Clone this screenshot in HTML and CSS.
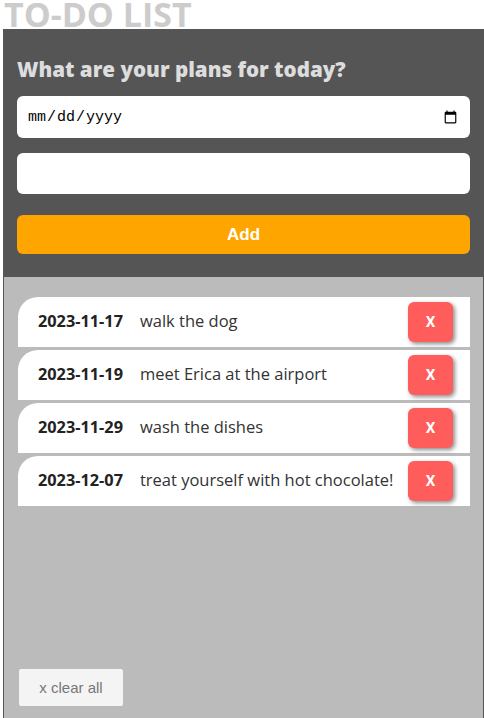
FILE: index.html
```html
<!DOCTYPE html>
<html lang="en">
<head>
<meta charset="utf-8">
<title>To-Do List</title>
<link rel="stylesheet" href="styles.css">
</head>
<body>
<h1 class="title">TO-DO LIST</h1>
<div class="app">
  <form class="entry">
    <h2 class="prompt">What are your plans for today?</h2>
    <input class="field field-date" type="date">
    <input class="field field-text" type="text">
    <button class="add" type="button">Add</button>
  </form>
  <section class="board">
    <ul class="tasks">
      <li class="task"><span class="task-date">2023-11-17</span><span class="task-text">walk the dog</span><button class="del" type="button">X</button></li>
      <li class="task"><span class="task-date">2023-11-19</span><span class="task-text">meet Erica at the airport</span><button class="del" type="button">X</button></li>
      <li class="task"><span class="task-date">2023-11-29</span><span class="task-text">wash the dishes</span><button class="del" type="button">X</button></li>
      <li class="task"><span class="task-date">2023-12-07</span><span class="task-text">treat yourself with hot chocolate!</span><button class="del" type="button">X</button></li>
    </ul>
    <button class="clear" type="button">x clear all</button>
  </section>
</div>
</body>
</html>
```
FILE: styles.css
```css
html, body {
  margin: 0;
  padding: 0;
  background: #ffffff;
  overflow: hidden;
}
body {
  font-family: "Open Sans", "Liberation Sans", sans-serif;
  padding-left: 3px;
}
.title {
  margin: 0;
  font-size: 34px;
  line-height: 29px;
  font-weight: 700;
  color: #cccccc;
  padding-left: 1px;
}
.app {
  width: 481px;
  box-sizing: border-box;
  border-left: 1px solid #555555;
  border-right: 1px solid #555555;
}
.entry {
  background: #555555;
  padding: 27px 13px 23px;
  display: flex;
  flex-direction: column;
  margin: 0;
}
.prompt {
  margin: 0 0 13px;
  font-size: 20.6px;
  font-weight: 800;
  color: #dddddd;
  line-height: 27px;
}
.field {
  border: none;
  border-radius: 6px;
  height: 42px;
  box-sizing: border-box;
  padding: 0 10px;
  font-size: 16px;
  background: #ffffff;
  margin: 0 0 15px;
  outline: none;
}
.field-date {
  font-family: "Liberation Mono", monospace;
  font-size: 15px;
}
.field-text {
  height: 41px;
  margin-bottom: 21px;
}
.add {
  height: 39px;
  border: none;
  border-radius: 6px;
  background: #ffa500;
  color: #ffffff;
  font-family: "Liberation Sans", Arial, sans-serif;
  font-weight: 900;
  font-size: 17px;
}
.board {
  background: #bbbbbb;
  height: 441px;
  box-sizing: border-box;
  padding: 20px 13px 12px 14px;
  display: flex;
  flex-direction: column;
}
.tasks {
  list-style: none;
  margin: 0;
  padding: 0;
  flex: 1;
  display: flex;
  flex-direction: column;
  gap: 3px;
}
.task {
  height: 50px;
  background: #ffffff;
  border-top-left-radius: 20px;
  display: flex;
  align-items: center;
  padding: 0 17px 0 20px;
  font-size: 16.5px;
  color: #333333;
}
.task-date {
  font-weight: 700;
  font-size: 16.3px;
  margin-right: 17px;
  margin-bottom: 3px;
  color: #222222;
}
.task-text {
  flex: 1;
  white-space: nowrap;
  margin-bottom: 3px;
}
.del {
  width: 45px;
  height: 40px;
  border: none;
  border-radius: 6px;
  background: #ff5c5c;
  color: #ffffff;
  font-family: "Roboto", "Liberation Sans", sans-serif;
  font-weight: 700;
  font-size: 15px;
  box-shadow: 2px 2px 4px rgba(0, 0, 0, 0.45);
  flex-shrink: 0;
}
.clear {
  align-self: flex-start;
  margin-left: 1px;
  width: 104px;
  height: 37px;
  border: none;
  border-radius: 2px;
  background: #f4f4f4;
  color: #777777;
  font-family: "Liberation Sans", Arial, sans-serif;
  font-size: 15px;
}
```
